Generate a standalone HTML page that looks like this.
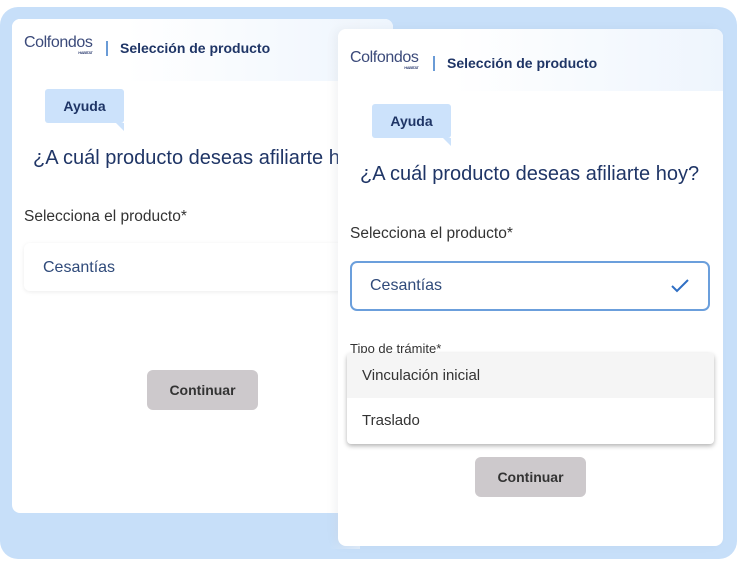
<!DOCTYPE html>
<html><head><meta charset="utf-8"><style>
*{margin:0;padding:0;box-sizing:border-box}
body{width:754px;height:576px;background:#fff;position:relative;overflow:hidden;font-family:"Liberation Sans",sans-serif}
.abs{position:absolute}
.outer{left:0;top:7px;width:737px;height:552px;background:#c7dff9;border-radius:18px}
.card{background:#fff;border-radius:8px;overflow:hidden}
.hdr{position:absolute;left:0;top:0;right:0;height:62px;background:linear-gradient(90deg,#fff 30%,#eef5fd)}
.logo{position:absolute;font-size:16px;color:#3b4a7a;letter-spacing:-0.4px}
.logo small{position:absolute;right:0;top:16px;font-size:4px;font-weight:bold;color:#3b4a7a}
.div{position:absolute;width:2px;height:15px;background:#6a9bd6}
.ttl{position:absolute;font-size:14px;font-weight:bold;color:#1f3566}
.bub{position:absolute;width:79px;height:34px;background:#cce2fb;border-radius:3px;color:#1f3566;font-weight:bold;font-size:14px;text-align:center;line-height:34px}
.bub:after{content:"";position:absolute;right:0;bottom:-8px;border-top:8px solid #cce2fb;border-left:8px solid transparent}
.q{position:absolute;font-size:20px;color:#1f3566;white-space:nowrap}
.lbl{position:absolute;font-size:15.5px;color:#333}
.btn{position:absolute;width:111px;height:40px;background:#cdc9cc;border-radius:6px;font-size:14px;font-weight:bold;color:#333;text-align:center;line-height:41px}
</style></head><body>
<div class="abs outer"></div>
<div class="abs card" style="left:12px;top:19px;width:381px;height:494px">
  <div class="hdr"></div>
  <div class="logo" style="left:12px;top:15px">Colfondos<small>HABITAT</small></div>
  <div class="div" style="left:94px;top:22px"></div>
  <div class="ttl" style="left:108px;top:21px">Selección de producto</div>
  <div class="bub" style="left:33px;top:70px">Ayuda</div>
  <div class="q" style="left:21px;top:128px">¿A cuál producto deseas afiliarte hoy?</div>
  <div class="lbl" style="left:12px;top:189px">Selecciona el producto*</div>
  <div class="abs" style="left:12px;top:224px;width:380px;height:48px;border-radius:6px;box-shadow:0 1px 4px rgba(0,0,0,.08)"></div>
  <div class="lbl" style="left:31px;top:240px;color:#2f4a7a;font-size:16px">Cesantías</div>
  <div class="btn" style="left:135px;top:351px">Continuar</div>
</div>
<div class="abs" style="left:330px;top:19px;width:30px;height:530px;background:linear-gradient(90deg,rgba(255,255,255,0),rgba(240,244,250,.6))"></div>
<div class="abs card" style="left:338px;top:29px;width:385px;height:517px;box-shadow:-4px 0 10px rgba(0,0,0,.04)">
  <div class="hdr"></div>
  <div class="logo" style="left:12px;top:20px">Colfondos<small>HABITAT</small></div>
  <div class="div" style="left:95px;top:27px"></div>
  <div class="ttl" style="left:109px;top:26px">Selección de producto</div>
  <div class="bub" style="left:34px;top:75px">Ayuda</div>
  <div class="q" style="left:22px;top:134px">¿A cuál producto deseas afiliarte hoy?</div>
  <div class="lbl" style="left:12px;top:196px">Selecciona el producto*</div>
  <div class="abs" style="left:12px;top:232px;width:360px;height:50px;border:2px solid #6b9fdc;border-radius:7px"></div>
  <div class="lbl" style="left:32px;top:248px;color:#2f4a7a;font-size:16px">Cesantías</div>
  <svg class="abs" style="left:333px;top:250px" width="18" height="14" viewBox="0 0 18 14"><path d="M1 7l5 5L17 1" fill="none" stroke="#2f6fc4" stroke-width="2"/></svg>
  <div class="lbl" style="left:12px;top:312px;font-size:13px">Tipo de trámite*</div>
  <div class="abs" style="left:9px;top:324px;width:367px;height:91px;background:#fff;border-radius:4px;box-shadow:0 2px 5px rgba(0,0,0,.3);overflow:hidden">
    <div style="height:45px;background:#f5f5f5;padding-left:15px;line-height:46px;font-size:15px;color:#333">Vinculación inicial</div>
    <div style="height:46px;padding-left:15px;line-height:46px;font-size:15px;color:#333">Traslado</div>
  </div>
  <div class="btn" style="left:137px;top:428px">Continuar</div>
</div>
</body></html>
